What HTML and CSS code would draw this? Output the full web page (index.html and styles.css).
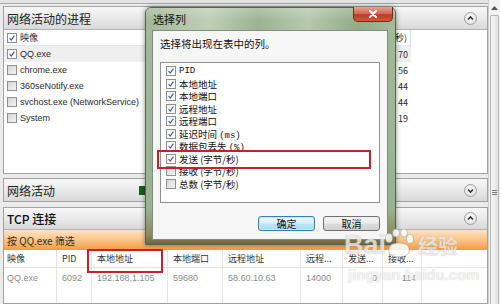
FILE: index.html
```html
<!DOCTYPE html>
<html>
<head>
<meta charset="utf-8">
<link rel="stylesheet" href="styles.css">
</head>
<body>
<div class="screen">
  <div class="main">
    <div class="topstrip"></div>

    <section class="panel p1">
      <div class="phead"><span class="ptitle">网络活动的进程</span><span class="chev"><svg viewBox="0 0 13 13" width="13" height="13"><polyline points="4,7.5 6.5,5 9,7.5" fill="none" stroke="#333" stroke-width="1.6"/></svg></span></div>
      <div class="pbody">
        <div class="trow thead"><span class="cb on"><svg viewBox="0 0 10 10"><polyline points="2,5 4,7.5 8,2" fill="none" stroke="#3d5a95" stroke-width="1.4"/></svg></span><span class="name cjk">映像</span><span class="val"><span>发送 (字节/秒)</span></span></div>
        <div class="trow sel"><span class="cb on"><svg viewBox="0 0 10 10"><polyline points="2,5 4,7.5 8,2" fill="none" stroke="#3d5a95" stroke-width="1.4"/></svg></span><span class="name">QQ.exe</span><span class="val">70</span></div>
        <div class="trow"><span class="cb"></span><span class="name">chrome.exe</span><span class="val">56</span></div>
        <div class="trow"><span class="cb"></span><span class="name">360seNotify.exe</span><span class="val">44</span></div>
        <div class="trow"><span class="cb"></span><span class="name">svchost.exe (NetworkService)</span><span class="val">44</span></div>
        <div class="trow"><span class="cb"></span><span class="name">System</span><span class="val">19</span></div>
      </div>
    </section>

    <section class="panel p2">
      <div class="phead"><span class="ptitle">网络活动</span><span class="graph"></span><span class="chev"><svg viewBox="0 0 13 13" width="13" height="13"><polyline points="4,5.5 6.5,8 9,5.5" fill="none" stroke="#333" stroke-width="1.6"/></svg></span></div>
    </section>

    <section class="panel p3">
      <div class="phead"><span class="ptitle tcp">TCP 连接</span><span class="chev"><svg viewBox="0 0 13 13" width="13" height="13"><polyline points="4,7.5 6.5,5 9,7.5" fill="none" stroke="#333" stroke-width="1.6"/></svg></span></div>
      <div class="filter">按 QQ.exe 筛选</div>
      <div class="tcp-table">
        <div class="col c1"><div class="th">映像</div><div class="td">QQ.exe</div></div>
        <div class="col c2"><div class="th">PID</div><div class="td">6092</div></div>
        <div class="col c3"><div class="th">本地地址</div><div class="td">192.168.1.105</div></div>
        <div class="col c4"><div class="th">本地端口</div><div class="td">59680</div></div>
        <div class="col c5"><div class="th">远程地址</div><div class="td">58.60.10.63</div></div>
        <div class="col c6"><div class="th">远程...</div><div class="td">14000</div></div>
        <div class="col c7"><div class="th">发送...</div><div class="td right">0</div></div>
        <div class="col c8"><div class="th">接收...</div><div class="td right">114</div></div>
        <div class="col c9"><div class="th"></div><div class="td"></div></div>
      </div>
    </section>
  </div>

  <div class="scrollbar">
    <div class="sb-up"><svg viewBox="0 0 7 4" width="7" height="4"><polygon points="0,4 3.5,0 7,4" fill="#555"/></svg></div>
    <div class="sb-thumb"><span class="grip"></span></div>
  </div>

  <div class="dialog">
    <div class="dtitle">选择列</div>
    <div class="dclose"><svg viewBox="0 0 10 8" width="10" height="8"><path d="M2 1 L8 7 M8 1 L2 7" stroke="#fff" stroke-width="2" stroke-linecap="round"/></svg></div>
    <div class="dcontent">
      <div class="dtext">选择将出现在表中的列。</div>
      <div class="listbox">
        <div class="litem"><span class="cb on"><svg viewBox="0 0 10 10"><polyline points="2,5 4,7.5 8,2" fill="none" stroke="#3d5a95" stroke-width="1.4"/></svg></span><span class="mono">PID</span></div>
        <div class="litem"><span class="cb on"><svg viewBox="0 0 10 10"><polyline points="2,5 4,7.5 8,2" fill="none" stroke="#3d5a95" stroke-width="1.4"/></svg></span><span>本地地址</span></div>
        <div class="litem"><span class="cb on"><svg viewBox="0 0 10 10"><polyline points="2,5 4,7.5 8,2" fill="none" stroke="#3d5a95" stroke-width="1.4"/></svg></span><span>本地端口</span></div>
        <div class="litem"><span class="cb on"><svg viewBox="0 0 10 10"><polyline points="2,5 4,7.5 8,2" fill="none" stroke="#3d5a95" stroke-width="1.4"/></svg></span><span>远程地址</span></div>
        <div class="litem"><span class="cb on"><svg viewBox="0 0 10 10"><polyline points="2,5 4,7.5 8,2" fill="none" stroke="#3d5a95" stroke-width="1.4"/></svg></span><span>远程端口</span></div>
        <div class="litem"><span class="cb on"><svg viewBox="0 0 10 10"><polyline points="2,5 4,7.5 8,2" fill="none" stroke="#3d5a95" stroke-width="1.4"/></svg></span><span>延迟时间 <span class="mono">(ms)</span></span></div>
        <div class="litem"><span class="cb on"><svg viewBox="0 0 10 10"><polyline points="2,5 4,7.5 8,2" fill="none" stroke="#3d5a95" stroke-width="1.4"/></svg></span><span>数据包丢失 <span class="mono">(%)</span></span></div>
        <div class="litem"><span class="cb on"><svg viewBox="0 0 10 10"><polyline points="2,5 4,7.5 8,2" fill="none" stroke="#3d5a95" stroke-width="1.4"/></svg></span><span>发送 (字节/秒)</span></div>
        <div class="litem"><span class="cb"></span><span>接收 (字节/秒)</span></div>
        <div class="litem"><span class="cb"></span><span>总数 (字节/秒)</span></div>
      </div>
      <div class="dbuttons">
        <button class="btn primary">确定</button>
        <button class="btn">取消</button>
      </div>
    </div>
  </div>

  <div class="redbox rb-send"></div>
  <div class="redbox rb-addr"></div>

  <div class="watermark">
    <div class="wm-logo"><span class="wm-bai">Bai</span><svg class="paw" viewBox="0 0 34 30" width="34" height="30"><g fill="rgba(255,255,255,0.85)" stroke="rgba(150,150,150,0.55)" stroke-width="1"><ellipse cx="7" cy="9" rx="3.5" ry="4.5"/><ellipse cx="14" cy="4" rx="3.5" ry="4"/><ellipse cx="22" cy="4" rx="3.5" ry="4"/><ellipse cx="28" cy="10" rx="3.5" ry="4.5"/><path d="M8 17 C10 13 24 13 26 17 C29 22 27 28 17 28 C7 28 5 22 8 17 Z"/></g></svg><span class="wm-jy">经验</span></div>
    <div class="wm-url">jingyan.baidu.com</div>
  </div>
</div>
</body>
</html>
```

FILE: styles.css
```css
* { box-sizing: border-box; }

body {
  margin: 0;
  width: 500px;
  height: 304px;
  overflow: hidden;
  background: #ebebeb;
  font-family: "Liberation Sans", "Noto Sans CJK SC", sans-serif;
  font-size: 9px;
  color: #333;
}

.screen {
  position: relative;
  display: flex;
  width: 500px;
  height: 304px;
  overflow: hidden;
}

.main {
  width: 488px;
  padding-left: 3px;
  display: flex;
  flex-direction: column;
}

.topstrip {
  height: 4px;
  margin: 0 0 2px -3px;
  background: #e4e4e4;
  border-bottom: 1px solid #a9a9a9;
}

.panel {
  border: 1px solid #a2a2a2;
  background: #fff;
}

.phead {
  display: flex;
  align-items: center;
  height: 23px;
  padding: 0 10px 0 3px;
  background: linear-gradient(#f7f7f7, #ebebeb 45%, #d9d9d9);
  border-bottom: 1px solid #b3b3b3;
  font-family: "Noto Sans CJK SC", sans-serif;
  font-size: 12px;
  color: #222;
}

.ptitle { flex: 1; }
.ptitle.tcp { font-weight: 500; color: #111; }

.chev {
  width: 13px;
  height: 13px;
  border-radius: 50%;
  border: 1px solid #9d9d9d;
  background: radial-gradient(circle at 50% 35%, #ffffff, #e4e4e4 70%, #cfcfcf);
  display: flex;
  align-items: center;
  justify-content: center;
}
.chev svg { display: block; margin: -1px; }

/* panel 1 */
.p1 .pbody { height: 143px; }

.trow {
  display: flex;
  align-items: center;
  width: 407px;
  height: 16px;
  padding-left: 3px;
  font-size: 9px;
  color: #2a2a2a;
}
.trow.thead { border-bottom: 1px solid #dde8f3; }
.trow.sel { background: #efefef; }

.cb {
  width: 10px;
  height: 10px;
  flex: none;
  border: 1px solid #8f8f8f;
  background: linear-gradient(135deg, #d6d6d6, #f3f3f3);
  display: flex;
}
.cb.on { background: linear-gradient(135deg, #f4f4f4, #ffffff); }
.cb svg { width: 8px; height: 8px; display: block; }

.name { flex: 1; margin-left: 3px; white-space: nowrap; }
.cjk { font-family: "Noto Sans CJK SC", sans-serif; }

.val {
  width: 19px;
  flex: none;
  display: flex;
  justify-content: flex-end;
  padding-right: 3px;
  white-space: nowrap;
  font-family: "Noto Sans CJK SC", sans-serif;
}
.thead .val { border-right: 1px solid #cfdff0; height: 16px; align-items: center; }

/* panel 2 */
.p2 { margin-top: 4px; }
.p2 .phead { height: 22px; border-bottom: none; }
.p2 .ptitle { flex: none; width: 132px; }
.graph {
  width: 60px;
  height: 9px;
  background: #1d5b22;
  margin-right: auto;
}

/* panel 3 */
.p3 {
  margin-top: 5px;
  flex: 1;
  display: flex;
  flex-direction: column;
}
.p3 .phead { height: 22px; }

.filter {
  height: 20px;
  display: flex;
  align-items: center;
  padding-left: 3px;
  background: linear-gradient(#fde3c4, #fbc78f 45%, #f59b3e);
  font-family: "Noto Sans CJK SC", sans-serif;
  font-size: 10px;
  color: #3a2a1a;
}

.tcp-table {
  flex: 1;
  display: flex;
}
.col {
  border-right: 1px solid #e4e4e4;
  display: flex;
  flex-direction: column;
}
.c1 { width: 53px; }
.c2 { width: 35px; }
.c3 { width: 76px; }
.c4 { width: 55px; }
.c5 { width: 78px; }
.c6 { width: 42px; }
.c7 { width: 40px; }
.c8 { width: 39px; }
.c9 { flex: 1; border-right: none; }

.th {
  height: 18px;
  display: flex;
  align-items: center;
  padding-left: 5px;
  border-bottom: 1px solid #e4e4e4;
  font-family: "Noto Sans CJK SC", sans-serif;
  font-size: 9px;
  color: #333;
  white-space: nowrap;
  overflow: hidden;
}
.c1 .th, .c1 .td { padding-left: 3px; }

.td {
  height: 20px;
  display: flex;
  align-items: center;
  padding-left: 5px;
  font-size: 9px;
  color: #8c8c8c;
  white-space: nowrap;
}
.td.right { justify-content: flex-end; padding-right: 5px; }

/* scrollbar */
.scrollbar {
  width: 12px;
  background: #f2f2f2;
  border-left: 1px solid #cfcfcf;
  display: flex;
  flex-direction: column;
  align-items: center;
}
.sb-up { height: 15px; display: flex; align-items: center; }
.sb-thumb {
  flex: 1;
  width: 9px;
  border: 1px solid #b4b4b4;
  border-bottom: none;
  border-radius: 2px 2px 0 0;
  background: linear-gradient(to right, #f6f6f6, #e2e2e2);
  position: relative;
}
.grip {
  position: absolute;
  left: 1px;
  top: 174px;
  width: 5px;
  height: 5px;
  border-top: 1px solid #777;
  border-bottom: 1px solid #777;
}
.grip::after {
  content: "";
  position: absolute;
  left: 0;
  right: 0;
  top: 1px;
  border-top: 1px solid #777;
}

/* dialog */
.dialog {
  position: absolute;
  left: 145px;
  top: 7px;
  width: 251px;
  height: 238px;
  border: 1px solid #56644f;
  border-radius: 6px 6px 0 0;
  padding: 0 7px 4px 6px;
  display: flex;
  flex-direction: column;
  background:
    linear-gradient(#b0c2a8 0, #a3b89a 12%, #9ab291 85%, #8d8a5c 96%, #7a6436 100%);
  box-shadow: 0 0 5px rgba(0, 0, 0, 0.45);
}

.dtitle {
  height: 22px;
  display: flex;
  align-items: center;
  margin: 0 -7px 0 -6px;
  padding-left: 7px;
  border-radius: 5px 5px 0 0;
  background:
    linear-gradient(rgba(255,255,255,0.22), rgba(255,255,255,0) 60%),
    linear-gradient(to right, #a1b797, #bfcfb6 25%, #9cb393 45%, #b6c8ad 65%, #93ab89 85%, #a5b99c);
  font-family: "Noto Sans CJK SC", sans-serif;
  font-size: 11px;
  color: #111;
}

.dclose {
  position: absolute;
  left: 207px;
  top: -1px;
  width: 40px;
  height: 15px;
  border: 1px solid #6f2a1e;
  border-top: none;
  border-radius: 0 0 5px 5px;
  background: linear-gradient(#e9a291, #d4614a 50%, #b83a22 55%, #cf5a3a);
  display: flex;
  align-items: center;
  justify-content: center;
}

.dcontent {
  flex: 1;
  background: #f6f6f6;
  border: 1px solid #7f8f7a;
  padding: 6px 7px 0 7px;
  display: flex;
  flex-direction: column;
}

.dtext {
  height: 13px;
  line-height: 13px;
  font-family: "Noto Sans CJK SC", sans-serif;
  font-size: 10.5px;
  color: #111;
}

.listbox {
  margin-top: 12px;
  width: 220px;
  height: 141px;
  background: #fff;
  border: 1px solid #8c9097;
  padding: 2px 0 0 5px;
}

.litem {
  height: 12.5px;
  display: flex;
  align-items: center;
  font-family: "Noto Sans CJK SC", sans-serif;
  font-size: 9.5px;
  color: #111;
  white-space: nowrap;
}
.litem .cb { width: 10px; height: 10px; margin-right: 3px; }
.mono { font-family: "Liberation Mono", monospace; font-size: 9px; }

.dbuttons {
  margin-top: 13px;
  display: flex;
  justify-content: flex-end;
  gap: 8px;
}

.btn {
  width: 57px;
  height: 15px;
  padding: 0;
  border: 1px solid #707070;
  border-radius: 3px;
  background: linear-gradient(#f3f3f3, #ebebeb 48%, #dddddd 52%, #d0d0d0);
  font-family: "Noto Sans CJK SC", sans-serif;
  font-size: 10px;
  line-height: 13px;
  color: #111;
}
.btn.primary {
  border-color: #3c7fb1;
  background: linear-gradient(#eaf6fd, #d9f0fc 48%, #bee6fd 52%, #a7d9f5);
  box-shadow: inset 0 0 0 1px #c4e7fb;
}

/* annotations */
.redbox {
  position: absolute;
  border: 2px solid #c8202a;
}
.rb-send { left: 157px; top: 150px; width: 214px; height: 19px; }
.rb-addr { left: 87px; top: 249px; width: 76px; height: 24px; }

/* watermark */
.watermark {
  position: absolute;
  left: 344px;
  top: 223px;
  width: 130px;
  pointer-events: none;
}
.wm-logo {
  display: flex;
  align-items: flex-end;
  height: 36px;
}
.wm-bai {
  font-family: "Liberation Sans", sans-serif;
  font-weight: bold;
  font-size: 27px;
  line-height: 28px;
  color: rgba(255, 255, 255, 0.7);
  text-shadow: 0 0 1px rgba(120, 120, 120, 0.55);
}
.paw { margin: 0 2px 0 -4px; }
.wm-jy {
  font-family: "Noto Sans CJK SC", sans-serif;
  font-weight: bold;
  font-size: 20px;
  line-height: 27px;
  color: rgba(255, 255, 255, 0.7);
  text-shadow: 0 0 1px rgba(120, 120, 120, 0.55);
}
.wm-url {
  margin-top: 7px;
  padding-left: 4px;
  font-family: "Liberation Sans", sans-serif;
  font-weight: bold;
  font-size: 15px;
  color: rgba(255, 255, 255, 0.75);
  text-shadow: 0 0 1px rgba(140, 140, 140, 0.5);
}
```
